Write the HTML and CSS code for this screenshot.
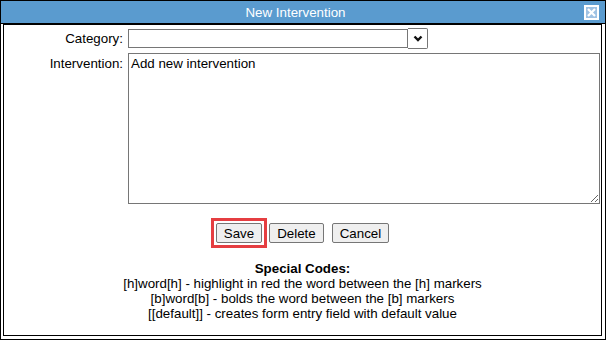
FILE: index.html
```html
<!DOCTYPE html>
<html lang="en">
<head>
  <meta charset="UTF-8">
  <meta name="viewport" content="width=device-width, initial-scale=1.0">
  <title>New Intervention</title>
  <link rel="stylesheet" href="styles.css">
</head>
<body>
  <div class='dialog'>
    <div class='titlebar'>
      <span class='title'>New Intervention</span>
      <span class='close'>
        <svg width="9" height="9" viewBox="0 0 9 9"><path d="M1 1L8 8M8 1L1 8" stroke="#fff" stroke-width="2.2"/></svg>
      </span>
    </div>
    <div class='panel'>
      <form class='fields'>
        <label class='label label-mid' for='category'>Category:</label>
        <div class='combo'>
          <select id='category' class='combo-field'><option></option></select>
          <span class='combo-btn'>
            <svg width="10" height="7" viewBox="0 0 10 7"><path d="M1.5 1.5L5 5L8.5 1.5" fill="none" stroke="#111" stroke-width="2.4"/></svg>
          </span>
        </div>
        <label class='label' for='intervention'>Intervention:</label>
        <textarea id='intervention' class='memo'>Add new intervention</textarea>
      </form>
      <div class='actions'>
        <!-- red frame marks the focused button -->
        <span class='focus-ring'><button class='btn'>Save</button></span>
        <button class='btn'>Delete</button>
        <button class='btn'>Cancel</button>
      </div>
      <div class='codes'>
        <div class='codes-title'>Special Codes:</div>
        <div>[h]word[h] - highlight in red the word between the [h] markers</div>
        <div>[b]word[b] - bolds the word between the [b] markers</div>
        <div>[[default]] - creates form entry field with default value</div>
      </div>
    </div>
  </div>
</body>
</html>
```

FILE: styles.css
```css
body{
  margin:0px;
  font-family:"Liberation Sans", Arial, sans-serif;
  font-size:13.333px;
  color:#000;
  background:#fff;
}
.dialog{
  width:606px;
  height:340px;
  box-sizing:border-box;
  border:1px solid #000;
  display:flex;
  flex-direction:column;
}
.titlebar{
  height:22px;
  background-color:#5a9bcf;
  border-bottom:1px solid #000;
  display:flex;
  align-items:center;
  padding:0 6px;
}
.title{
  flex:1;
  text-align:center;
  color:#fff;
  line-height:15px;
}
.close{
  width:15px;
  height:15px;
  box-sizing:border-box;
  border:2px solid #fff;
  background-color:#9fc2e3;
  display:flex;
  justify-content:center;
  align-items:center;
}
.panel{
  flex:1;
  margin:0 3px 3px 2px;
  border:1px solid #000;
  display:flex;
  flex-direction:column;
  align-items:center;
}
.fields{
  align-self:stretch;
  margin:3px 1px 0 0;
  display:grid;
  grid-template-columns:119px 1fr;
  column-gap:5px;
  row-gap:4px;
}
.label{
  text-align:right;
  line-height:15px;
  padding-top:3px;
}
.label-mid{
  align-self:center;
  padding-top:0;
}
.combo{
  width:300px;
  height:21px;
  display:flex;
  align-items:center;
}
.combo-field{
  flex:1;
  height:19px;
  margin:0;
  padding:0 2px;
  border:1px solid #767676;
  border-radius:0;
  background:#fff;
  appearance:none;
  font:inherit;
}
.combo-btn{
  width:20px;
  height:21px;
  box-sizing:border-box;
  border:1px solid #767676;
  border-left:none;
  border-radius:0 2px 2px 0;
  display:flex;
  justify-content:center;
  align-items:center;
}
.memo{
  width:472px;
  height:151px;
  box-sizing:border-box;
  margin:0;
  padding:2px;
  border:1px solid #767676;
  font:inherit;
  line-height:15px;
  color:#000;
}
.actions{
  display:flex;
  align-items:center;
  gap:7px;
  margin-top:19px;
}
.btn{
  height:20px;
  padding:0 7px;
  margin:0;
  font:inherit;
  color:#000;
  background-color:#efefef;
  border:1px solid #767676;
  border-radius:2px;
  display:block;
}
.btn + .btn{
  margin-left:1px;
}
.focus-ring{
  border:3px solid #e53e41;
  padding:2px;
  margin:-5px;
}
.codes{
  margin-top:18px;
  text-align:center;
  line-height:15px;
}
.codes-title{
  font-weight:bold;
}
```
